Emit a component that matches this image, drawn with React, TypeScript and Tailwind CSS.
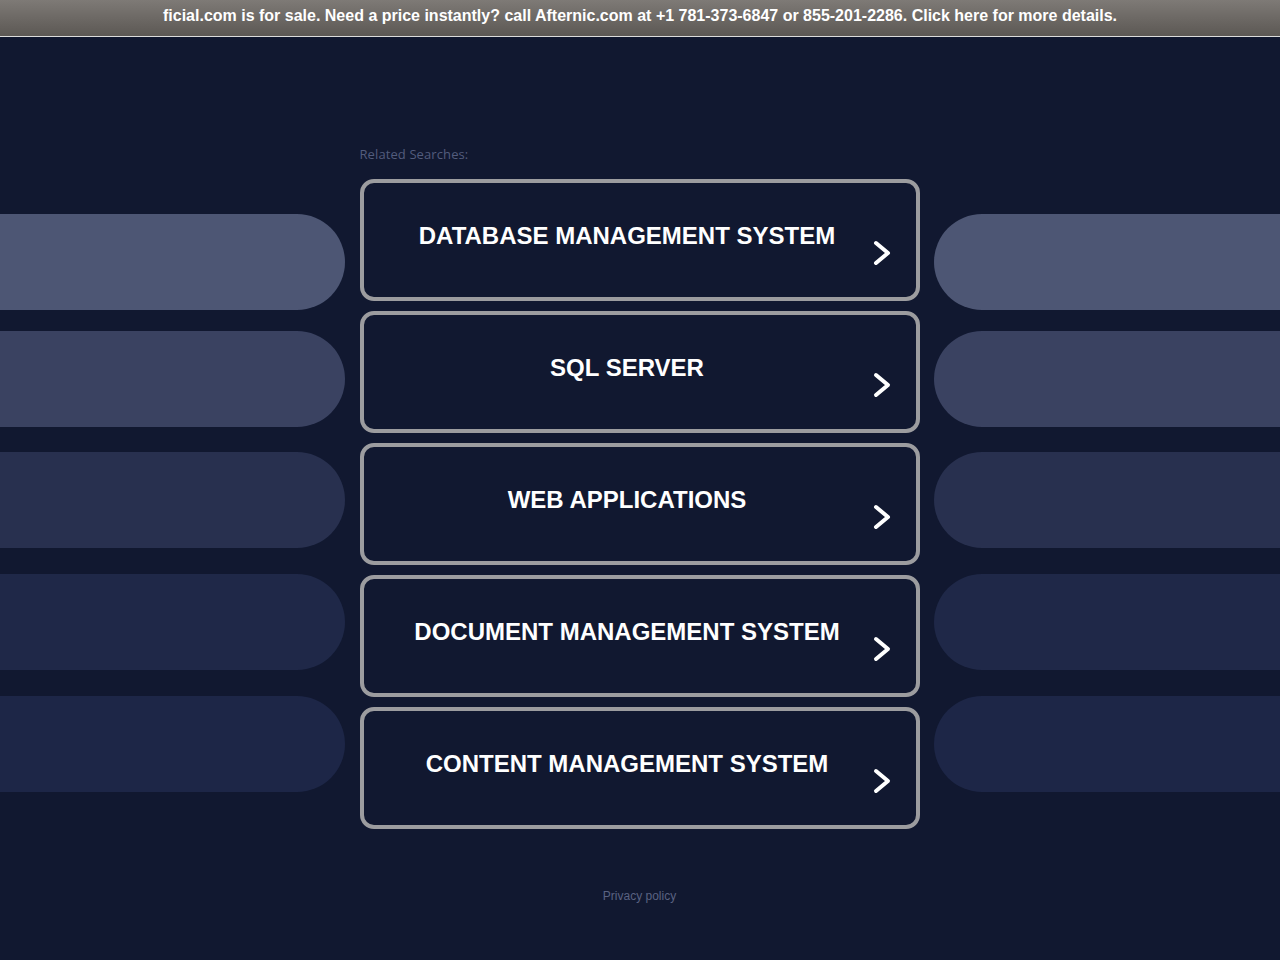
import React from "react";

const searches = [
  "DATABASE MANAGEMENT SYSTEM",
  "SQL SERVER",
  "WEB APPLICATIONS",
  "DOCUMENT MANAGEMENT SYSTEM",
  "CONTENT MANAGEMENT SYSTEM",
];

// side decoration pills, top to bottom
const pills = [
  { color: "bg-[#4d5674]", gap: "mt-0" },
  { color: "bg-[#3a4261]", gap: "mt-[21px]" },
  { color: "bg-[#28304f]", gap: "mt-[25px]" },
  { color: "bg-[#1f2848]", gap: "mt-[26px]" },
  { color: "bg-[#1d2647]", gap: "mt-[26px]" },
];

function Chevron() {
  return (
    <svg
      viewBox="0 0 18 26"
      className="mt-[26px] h-[26px] w-[18px] shrink-0"
      fill="none"
      stroke="white"
      strokeWidth="4"
      strokeLinecap="round"
      strokeLinejoin="round"
    >
      <path d="M3 3 L15 13 L3 23" />
    </svg>
  );
}

function PillColumn({ side }: { side: "left" | "right" }) {
  return (
    <div className="flex flex-col pt-[177px]">
      {pills.map((pill, index) => (
        <div
          key={index}
          className={`h-[96px] ${pill.color} ${pill.gap} ${
            side === "left" ? "rounded-r-full" : "rounded-l-full"
          }`}
        />
      ))}
    </div>
  );
}

export default function App() {
  return (
    <div className="min-h-[960px] bg-[#111830] font-['Liberation_Sans',Arial,sans-serif]">
      <div className="flex h-[37px] items-center justify-center border-b border-[#dcdcdc] bg-gradient-to-b from-[#7e7a76] to-[#5c5854] pb-[4px]">
        <p className="font-['Liberation_Sans_Narrow','Liberation_Sans',Arial,sans-serif] text-[16px] font-bold text-white">
          ficial.com is for sale. Need a price instantly? call Afternic.com at
          +1 781-373-6847 or 855-201-2286. Click here for more details.
        </p>
      </div>

      <div className="grid grid-cols-[345px_560px_346px] gap-x-[14.5px]">
        <PillColumn side="left" />

        <div className="flex flex-col pt-[108px]">
          <p className="font-['Open_Sans',sans-serif] text-[13px] font-medium leading-[18px] tracking-[0.1px] text-[#535c7d]">
            Related Searches:
          </p>
          <div className="mt-[16px] flex flex-col gap-[10px]">
            {searches.map((label) => (
              <a
                key={label}
                href="#"
                className="flex h-[122px] items-center rounded-[14px] border-4 border-[#9c9c9f] pl-[18px] pr-[25px]"
              >
                <span className="mb-[8px] flex-1 text-center text-[24px] font-bold leading-[28px] text-white">
                  {label}
                </span>
                <Chevron />
              </a>
            ))}
          </div>
          <p className="mt-[58px] text-center text-[12px] leading-[18px] text-[#5a6282]">
            Privacy policy
          </p>
        </div>

        <PillColumn side="right" />
      </div>
    </div>
  );
}
